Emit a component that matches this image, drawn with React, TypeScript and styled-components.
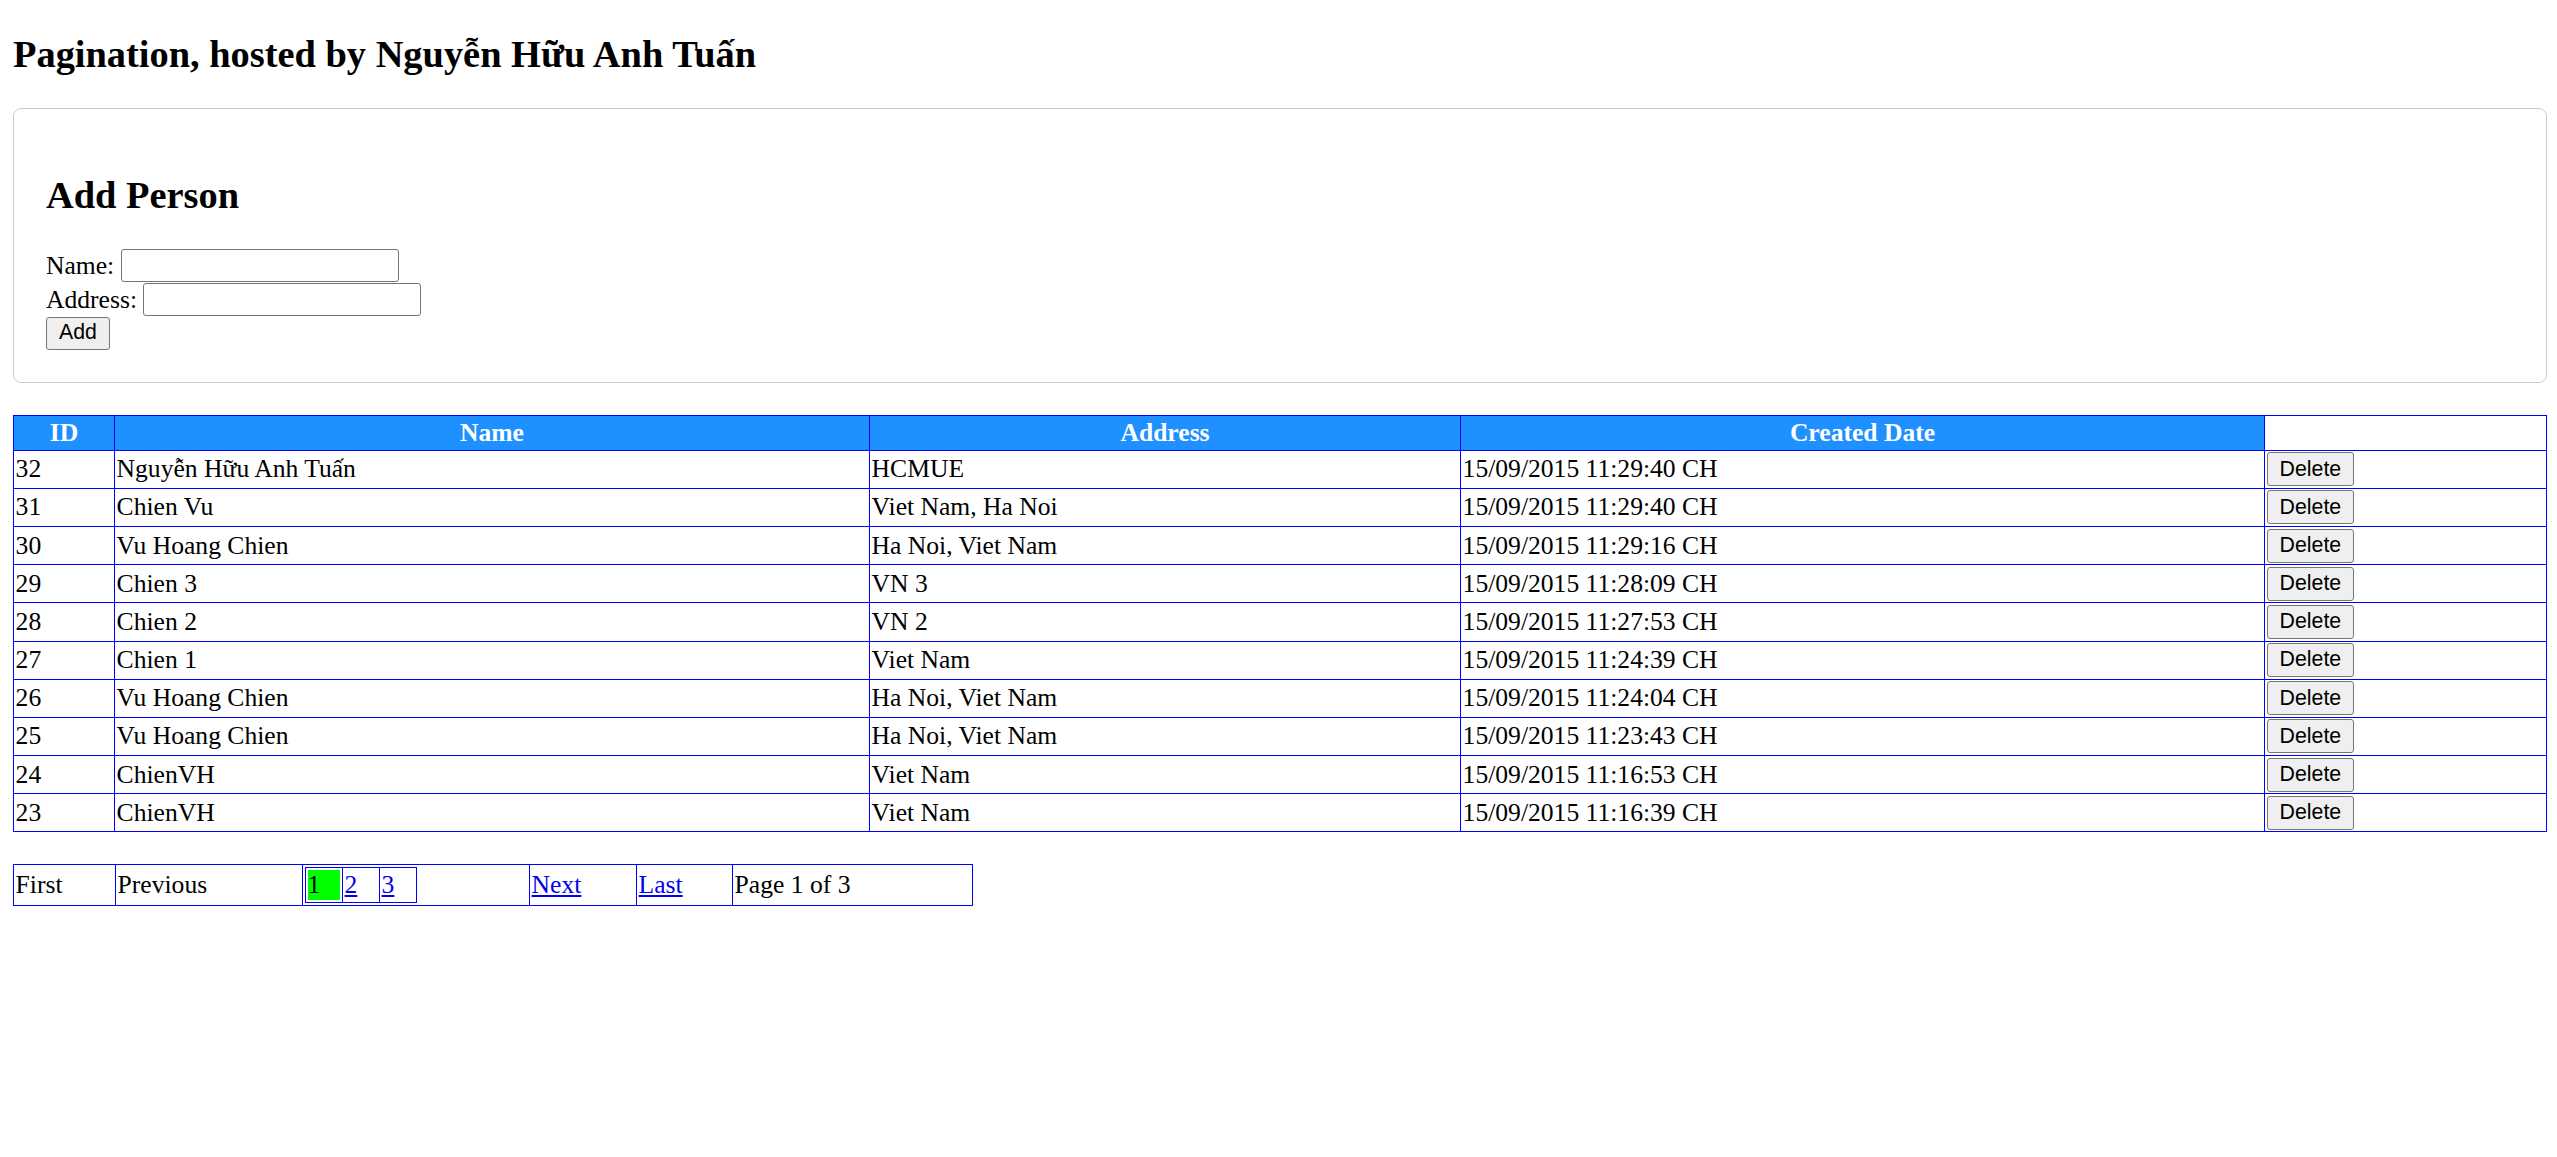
import React from "react";
import styled, { createGlobalStyle } from "styled-components";

const GlobalStyle = createGlobalStyle`
  body {
    margin: 0 10px 12.8px 13px;
    background: #ffffff;
    color: #000000;
    font-family: "Liberation Serif", "DejaVu Serif", serif;
    font-size: 25.6px;
  }
`;

const PageTitle = styled.h2`
  font-size: 38.4px;
  font-weight: bold;
  margin: 31.9px 0;
`;

const Card = styled.section`
  border: 1px solid #cccccc;
  border-radius: 8px;
  padding: 32px;
  margin-bottom: 32px;
`;

const CardTitle = styled.h2`
  font-size: 38.4px;
  font-weight: bold;
  margin: 31.9px 0;
`;

const Form = styled.form`
  display: flex;
  flex-direction: column;
  align-items: flex-start;
`;

const FieldRow = styled.label`
  display: flex;
  align-items: flex-start;
  gap: 6.4px;
  height: 34px;
  line-height: 33px;
`;

const TextInput = styled.input`
  box-sizing: border-box;
  width: 278px;
  height: 33px;
  border: 1px solid #767676;
  border-radius: 3px;
  padding: 1.6px 3.2px;
  background: #ffffff;
  font-family: "Liberation Sans", Arial, sans-serif;
  font-size: 21.3px;
`;

const PlainButton = styled.button<{ $h: number }>`
  box-sizing: border-box;
  height: ${(p) => p.$h}px;
  padding: 0 12px;
  border: 1px solid #767676;
  border-radius: 3px;
  background: #efefef;
  color: #000000;
  font-family: "Liberation Sans", Arial, sans-serif;
  font-size: 21.3px;
  line-height: 1;
  cursor: pointer;
`;

const DataTable = styled.table`
  width: 100%;
  table-layout: fixed;
  border-collapse: collapse;
  border: 1px solid #0000ff;
`;

const HeadCell = styled.th<{ $blank?: boolean }>`
  border: 1px solid #0000ff;
  padding: 2px 1.6px;
  background: ${(p) => (p.$blank ? "#ffffff" : "#1e90ff")};
  color: #ffffff;
  font-weight: bold;
  text-align: center;
`;

const Cell = styled.td`
  border: 1px solid #0000ff;
  padding: 1.6px;
  text-align: left;
  vertical-align: middle;
  white-space: nowrap;
`;

const PagerTable = styled.table`
  width: 960px;
  margin-top: 32px;
  table-layout: fixed;
  border-collapse: collapse;
  border: 1px solid #0000ff;
`;

const PagerCell = styled.td`
  border: 1px solid #0000ff;
  padding: 1.6px;
  vertical-align: middle;
  white-space: nowrap;
`;

const NumbersTable = styled.table`
  border-collapse: collapse;
  border: 1px solid #0000ff;
`;

const NumberCell = styled.td`
  border: 1px solid #0000ff;
  padding: 2px;
`;

const PageNum = styled.span<{ $active?: boolean }>`
  display: block;
  width: 32px;
  background: ${(p) => (p.$active ? "#00ff00" : "transparent")};
`;

const PageLink = styled.a`
  color: #0000ee;
  text-decoration: underline;
`;

type Person = { id: number; name: string; address: string; created: string };

const people: Person[] = [
  { id: 32, name: "Nguyễn Hữu Anh Tuấn", address: "HCMUE", created: "15/09/2015 11:29:40 CH" },
  { id: 31, name: "Chien Vu", address: "Viet Nam, Ha Noi", created: "15/09/2015 11:29:40 CH" },
  { id: 30, name: "Vu Hoang Chien", address: "Ha Noi, Viet Nam", created: "15/09/2015 11:29:16 CH" },
  { id: 29, name: "Chien 3", address: "VN 3", created: "15/09/2015 11:28:09 CH" },
  { id: 28, name: "Chien 2", address: "VN 2", created: "15/09/2015 11:27:53 CH" },
  { id: 27, name: "Chien 1", address: "Viet Nam", created: "15/09/2015 11:24:39 CH" },
  { id: 26, name: "Vu Hoang Chien", address: "Ha Noi, Viet Nam", created: "15/09/2015 11:24:04 CH" },
  { id: 25, name: "Vu Hoang Chien", address: "Ha Noi, Viet Nam", created: "15/09/2015 11:23:43 CH" },
  { id: 24, name: "ChienVH", address: "Viet Nam", created: "15/09/2015 11:16:53 CH" },
  { id: 23, name: "ChienVH", address: "Viet Nam", created: "15/09/2015 11:16:39 CH" },
];

export default function App() {
  return (
    <>
      <GlobalStyle />
      <PageTitle>Pagination, hosted by Nguyễn Hữu Anh Tuấn</PageTitle>

      <Card>
        <CardTitle>Add Person</CardTitle>
        <Form onSubmit={(e) => e.preventDefault()}>
          <FieldRow>
            Name:
            <TextInput type="text" />
          </FieldRow>
          <FieldRow>
            Address:
            <TextInput type="text" />
          </FieldRow>
          <PlainButton $h={33} type="submit">Add</PlainButton>
        </Form>
      </Card>

      <DataTable>
        <colgroup>
          <col style={{ width: 101 }} />
          <col style={{ width: 755 }} />
          <col style={{ width: 591 }} />
          <col style={{ width: 804 }} />
          <col />
        </colgroup>
        <thead>
          <tr>
            <HeadCell>ID</HeadCell>
            <HeadCell>Name</HeadCell>
            <HeadCell>Address</HeadCell>
            <HeadCell>Created Date</HeadCell>
            <HeadCell $blank />
          </tr>
        </thead>
        <tbody>
          {people.map((p) => (
            <tr key={p.id}>
              <Cell>{p.id}</Cell>
              <Cell>{p.name}</Cell>
              <Cell>{p.address}</Cell>
              <Cell>{p.created}</Cell>
              <Cell>
                <PlainButton $h={34} type="button">Delete</PlainButton>
              </Cell>
            </tr>
          ))}
        </tbody>
      </DataTable>

      <PagerTable>
        <colgroup>
          <col style={{ width: 102 }} />
          <col style={{ width: 187 }} />
          <col style={{ width: 227 }} />
          <col style={{ width: 107 }} />
          <col style={{ width: 96 }} />
          <col />
        </colgroup>
        <tbody>
          <tr>
            <PagerCell>First</PagerCell>
            <PagerCell>Previous</PagerCell>
            <PagerCell>
              <NumbersTable>
                <tbody>
                  <tr>
                    <NumberCell>
                      <PageNum $active>1</PageNum>
                    </NumberCell>
                    <NumberCell>
                      <PageNum>
                        <PageLink href="#">2</PageLink>
                      </PageNum>
                    </NumberCell>
                    <NumberCell>
                      <PageNum>
                        <PageLink href="#">3</PageLink>
                      </PageNum>
                    </NumberCell>
                  </tr>
                </tbody>
              </NumbersTable>
            </PagerCell>
            <PagerCell>
              <PageLink href="#">Next</PageLink>
            </PagerCell>
            <PagerCell>
              <PageLink href="#">Last</PageLink>
            </PagerCell>
            <PagerCell>Page 1 of 3</PagerCell>
          </tr>
        </tbody>
      </PagerTable>
    </>
  );
}
